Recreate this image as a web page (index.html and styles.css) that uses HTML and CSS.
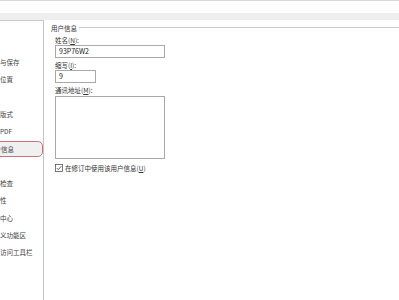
FILE: index.html
```html
<!DOCTYPE html>
<html lang="zh-CN">
<head>
<meta charset="utf-8">
<title>选项 - 用户信息</title>
<link rel="stylesheet" href="styles.css">
</head>
<body>
<div class="topbar"></div>
<div class="main">
  <nav class="sidebar">
    <ul class="nav">
      <li class="nav-item">视图</li>
      <li class="nav-item">编辑</li>
      <li class="nav-item">常规与保存</li>
      <li class="nav-item">文件位置</li>
      <li class="nav-item">修订</li>
      <li class="nav-item">中文版式</li>
      <li class="nav-item">输出PDF</li>
      <li class="nav-item active">用户信息</li>
      <li class="nav-item">打印</li>
      <li class="nav-item">拼写检查</li>
      <li class="nav-item">安全性</li>
      <li class="nav-item">信任中心</li>
      <li class="nav-item">自定义功能区</li>
      <li class="nav-item">快速访问工具栏</li>
    </ul>
  </nav>
  <section class="content">
    <div class="group-title"><span class="group-text">用户信息</span><span class="group-line"></span></div>
    <div class="form">
      <div class="label label-name">姓名(<u>N</u>):</div>
      <div class="field field-wide">93P76W2</div>
      <div class="label label-abbr">缩写(<u>I</u>):</div>
      <div class="field field-narrow">9</div>
      <div class="label label-addr">通讯地址(<u>M</u>):</div>
      <div class="field field-area"></div>
      <div class="check-row">
        <svg class="check-box" width="8" height="8" viewBox="0 0 8 8">
          <rect x="0.5" y="0.5" width="7" height="7" fill="#fff" stroke="#555" stroke-width="0.8"/>
          <path d="M1.8 4.1 L3.3 5.6 L6.3 2.2" fill="none" stroke="#333" stroke-width="0.8"/>
        </svg>
        <span>在修订中使用该用户信息(<u>U</u>)</span>
      </div>
    </div>
  </section>
</div>
</body>
</html>
```

FILE: styles.css
```css
* { box-sizing: border-box; }
html, body {
  margin: 0;
  padding: 0;
}
body {
  width: 399px;
  height: 300px;
  overflow: hidden;
  background: #fff;
  font-family: "Noto Sans CJK SC", "Noto Sans", sans-serif;
  font-size: 6.5px;
  color: #333;
}
.topbar {
  height: 20px;
  border-top: 1px solid #d8d8d8;
  background: linear-gradient(#fff 0, #fff 12px, #eeeeee 12px, #eeeeee 19px);
}
.main {
  display: flex;
  height: 280px;
}
.sidebar {
  flex: none;
  width: 44px;
  border-top: 1px solid #cacaca;
  border-right: 1px solid #c6c6c6;
  overflow: hidden;
}
.nav {
  list-style: none;
  margin: -2px 0 0 -13px;
  padding: 0;
  width: 56px;
}
.nav-item {
  height: 17.35px;
  line-height: 17.35px;
  white-space: nowrap;
  color: #444;
  padding-left: 0;
}
.nav-item.active {
  height: 16px;
  line-height: 14px;
  margin: 0.7px 0.5px 0.65px -1px;
  padding-left: 1px;
  border: 1px solid #c9727e;
  border-radius: 5px;
  background: #f1f0f0;
}
.content {
  flex: 1;
  padding-top: 3.5px;
}
.group-title {
  display: flex;
  align-items: center;
  height: 8px;
  padding-left: 7px;
}
.group-text {
  line-height: 8px;
  color: #333;
}
.group-line {
  flex: 1;
  margin-left: 2px;
  border-top: 1px solid #cbcbcb;
}
.form {
  padding-left: 11px;
}
.label {
  height: 8px;
  line-height: 8px;
  color: #333;
}
.label-name { margin-top: 4.5px; }
.label-abbr { margin-top: 2.5px; }
.label-addr { margin-top: 3px; }
.field {
  border: 1px solid #a9a9a9;
  background: #fff;
  padding-left: 3px;
  line-height: 11px;
  color: #222;
  font-size: 7px;
}
.field-wide { width: 110px; height: 13px; margin-top: 1px; }
.field-narrow { width: 41px; height: 13px; margin-top: 1.5px; }
.field-area { width: 110px; height: 63px; margin-top: 2px; }
.check-row {
  display: flex;
  align-items: center;
  gap: 2px;
  margin-top: 4.5px;
  height: 8px;
  line-height: 8px;
}
.check-box { flex: none; }
```
